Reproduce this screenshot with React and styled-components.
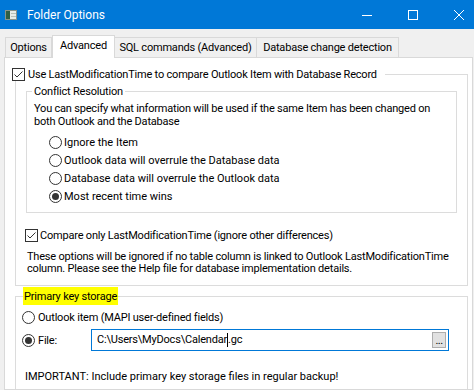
import React from "react";
import styled, { createGlobalStyle } from "styled-components";

const GlobalStyle = createGlobalStyle`
  html, body { margin: 0; padding: 0; background: #f0f0f0; }
  * { box-sizing: border-box; }
`;

const Window = styled.div`
  width: 474px;
  height: 390px;
  overflow: hidden;
  background: #f0f0f0;
  display: flex;
  flex-direction: column;
  font-family: Roboto, "Noto Sans", sans-serif;
  font-size: 11px;
  letter-spacing: -0.2px;
  color: #000;
`;

const TitleBar = styled.div`
  height: 29px;
  flex: none;
  background: #0078d7;
  display: flex;
  align-items: center;
  color: #fff;
`;

const AppIcon = styled.svg`
  margin-left: 5px;
  flex: none;
`;

const TitleText = styled.div`
  margin-left: 10px;
  flex: 1;
  font-size: 12px;
  letter-spacing: 0;
  line-height: 16px;
`;

const Controls = styled.div`
  display: flex;
  height: 29px;
  margin-right: -8px;
`;

const ControlButton = styled.div`
  width: 46px;
  height: 29px;
  display: flex;
  align-items: center;
  justify-content: center;
`;

const TabStrip = styled.div`
  height: 28px;
  flex: none;
  display: flex;
  align-items: flex-end;
  padding-left: 5px;
`;

const Tab = styled.div`
  width: ${({ $w }) => $w}px;
  height: ${({ $active }) => ($active ? 23 : 20)}px;
  margin-bottom: ${({ $active }) => ($active ? -1 : 0)}px;
  padding-bottom: ${({ $active }) => ($active ? 3 : 0)}px;
  background: ${({ $active }) => ($active ? "#fff" : "#f0f0f0")};
  border: 1px solid #d9d9d9;
  border-bottom: none;
  border-left-width: ${({ $noLeft }) => ($noLeft ? 0 : 1)}px;
  display: flex;
  align-items: center;
  justify-content: center;
  white-space: nowrap;
  position: relative;
  z-index: ${({ $active }) => ($active ? 1 : 0)};
`;

const Panel = styled.div`
  flex: 1;
  width: 469px;
  margin-left: 4px;
  background: #fff;
  border: 1px solid #d9d9d9;
  padding: 16px 4px 0 10px;
  overflow: hidden;
  display: flex;
  flex-direction: column;
`;

const Group = styled.div`
  border: 1px solid #dcdcdc;
  display: flex;
  flex-direction: column;
  flex: none;
`;

const OuterGroup = styled(Group)`
  width: 453px;
  padding-bottom: 10px;
`;

const InnerGroup = styled(Group)`
  margin: 10px 10px 0 10px;
  padding-bottom: 7px;
`;

const KeyGroup = styled(Group)`
  width: 453px;
  margin-top: 10px;
  height: 140px;
`;

const Caption = styled.div`
  align-self: flex-start;
  display: flex;
  align-items: center;
  gap: 3px;
  white-space: nowrap;
  background: ${({ $highlight }) => ($highlight ? "#ffff00" : "#fff")};
  height: ${({ $h }) => $h}px;
  margin-top: ${({ $top }) => $top}px;
  margin-left: ${({ $left }) => $left}px;
  padding: ${({ $pad }) => $pad};
`;

const Text = styled.div`
  white-space: nowrap;
  line-height: ${({ $lh }) => $lh || 13}px;
  margin-top: ${({ $top }) => $top || 0}px;
  margin-left: ${({ $left }) => $left || 0}px;
  letter-spacing: ${({ $ls }) => ($ls !== undefined ? `${$ls}px` : "inherit")};
`;

const OptionRow = styled.div`
  display: flex;
  align-items: center;
  gap: ${({ $gap }) => $gap}px;
  height: ${({ $h }) => $h || 18}px;
  margin-top: ${({ $top }) => $top || 0}px;
  margin-left: ${({ $left }) => $left}px;
  white-space: nowrap;
  letter-spacing: ${({ $ls }) => ($ls !== undefined ? `${$ls}px` : "inherit")};
`;

const Circle = styled.span`
  width: 13px;
  height: 13px;
  flex: none;
  border-radius: 50%;
  border: 1px solid #333;
  display: flex;
  align-items: center;
  justify-content: center;
  &::after {
    content: "";
    display: ${({ $checked }) => ($checked ? "block" : "none")};
    width: 7px;
    height: 7px;
    border-radius: 50%;
    background: #333;
  }
`;

const Box = styled.span`
  width: 13px;
  height: 13px;
  flex: none;
  border: 1px solid #333;
  background: #fff;
  display: flex;
  align-items: center;
  justify-content: center;
`;

const FileLabel = styled.span`
  width: 50px;
`;

const PathInput = styled.div`
  width: 358px;
  height: 22px;
  border: 1px solid #0078d7;
  display: flex;
  align-items: center;
  justify-content: space-between;
  padding: 0 2px 0 5px;
  white-space: nowrap;
`;

const Caret = styled.span`
  display: inline-block;
  width: 1px;
  height: 14px;
  background: #000;
  vertical-align: middle;
`;

const BrowseButton = styled.div`
  width: 14px;
  height: 16px;
  background: #e1e1e1;
  border: 1px solid #adadad;
  font-size: 11px;
  line-height: 16px;
  text-align: center;
  letter-spacing: -0.5px;
`;

const Check = () => (
  <Box>
    <svg width="11" height="11" viewBox="0 0 11 11">
      <path d="M1.5 5.5 L4 8 L9.5 2.5" fill="none" stroke="#333" strokeWidth="1" />
    </svg>
  </Box>
);

const Radio = ({ checked, children, gap = 2, left, top, h, ls }) => (
  <OptionRow $gap={gap} $left={left} $top={top} $h={h} $ls={ls}>
    <Circle $checked={checked} />
    <span>{children}</span>
  </OptionRow>
);

export default function App() {
  return (
    <>
      <GlobalStyle />
      <Window>
        <TitleBar>
          <AppIcon width="12" height="10" viewBox="0 0 12 10">
            <rect x="0.5" y="0.5" width="11" height="9" fill="#e8ece8" stroke="#8a948c" />
            <rect x="1" y="1" width="4" height="8" fill="#2f5f46" />
            <rect x="6" y="3" width="5" height="1" fill="#b8c0b8" />
            <rect x="6" y="6" width="5" height="1" fill="#b8c0b8" />
          </AppIcon>
          <TitleText>Folder Options</TitleText>
          <Controls>
            <ControlButton>
              <svg width="10" height="10" viewBox="0 0 10 10">
                <path d="M0 5.5 H10" stroke="#fff" strokeWidth="1" />
              </svg>
            </ControlButton>
            <ControlButton>
              <svg width="10" height="10" viewBox="0 0 10 10">
                <rect x="0.5" y="0.5" width="9" height="9" fill="none" stroke="#fff" strokeWidth="1" />
              </svg>
            </ControlButton>
            <ControlButton>
              <svg width="10" height="10" viewBox="0 0 10 10">
                <path d="M0 0 L10 10 M10 0 L0 10" stroke="#fff" strokeWidth="1" />
              </svg>
            </ControlButton>
          </Controls>
        </TitleBar>

        <TabStrip>
          <Tab $w={47}>Options</Tab>
          <Tab $w={63} $active>Advanced</Tab>
          <Tab $w={142} $noLeft>SQL commands (Advanced)</Tab>
          <Tab $w={142} $noLeft>Database change detection</Tab>
        </TabStrip>

        <Panel>
          <OuterGroup>
            <Caption $h={14} $top={-8} $left={-4} $pad="0 8px 0 0">
              <Check />
              <span>Use LastModificationTime to compare Outlook Item with Database Record</span>
            </Caption>

            <InnerGroup>
              <Caption $h={16} $top={-9} $left={5} $pad="0 2px">
                Conflict Resolution
              </Caption>
              <Text $top={3} $left={7}>
                You can specify what information will be used if the same Item has been changed on
                <br />
                both Outlook and the Database
              </Text>
              <Radio left={22} top={5} ls={0}>Ignore the Item</Radio>
              <Radio left={22} ls={0}>Outlook data will overrule the Database data</Radio>
              <Radio left={22} ls={0}>Database data will overrule the Outlook data</Radio>
              <Radio left={22} ls={0} checked>Most recent time wins</Radio>
            </InnerGroup>

            <OptionRow $gap={2} $left={9} $top={15} $h={14}>
              <Check />
              <span>Compare only LastModificationTime (ignore other differences)</span>
            </OptionRow>

            <Text $top={9} $left={11} $lh={12}>
              These options will be ignored if no table column is linked to Outlook LastModificationTime
              <br />
              column. Please see the Help file for database implementation details.
            </Text>
          </OuterGroup>

          <KeyGroup>
            <Caption $h={18} $top={-10} $left={7} $pad="0 1px" $highlight>
              Primary key storage
            </Caption>
            <Radio left={6} top={3} gap={3}>Outlook item (MAPI user-defined fields)</Radio>
            <OptionRow $gap={3} $left={6} $top={3} $h={22}>
              <Circle $checked />
              <FileLabel>File:</FileLabel>
              <PathInput>
                <span>
                  C:\Users\MyDocs\Calendar<Caret />.gc
                </span>
                <BrowseButton>...</BrowseButton>
              </PathInput>
            </OptionRow>
            <Text $top={19} $left={9} $ls={0}>
              IMPORTANT: Include primary key storage files in regular backup!
            </Text>
          </KeyGroup>
        </Panel>
      </Window>
    </>
  );
}
